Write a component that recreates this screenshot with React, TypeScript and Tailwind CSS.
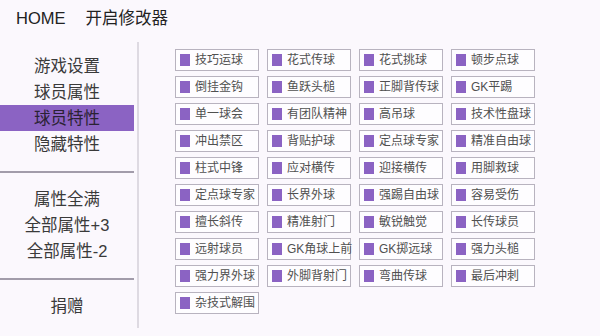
import React from 'react';

const traits = [
    '技巧运球', '花式传球', '花式挑球', '顿步点球',
    '倒挂金钩', '鱼跃头槌', '正脚背传球', 'GK平踢',
    '单一球会', '有团队精神', '高吊球', '技术性盘球',
    '冲出禁区', '背贴护球', '定点球专家', '精准自由球',
    '柱式中锋', '应对横传', '迎接横传', '用脚救球',
    '定点球专家', '长界外球', '强踢自由球', '容易受伤',
    '擅长斜传', '精准射门', '敏锐触觉', '长传球员',
    '远射球员', 'GK角球上前', 'GK掷远球', '强力头槌',
    '强力界外球', '外脚背射门', '弯曲传球', '最后冲刺',
    '杂技式解围',
];

const topMenu = ['游戏设置', '球员属性', '球员特性', '隐藏特性'];
const midMenu = ['属性全满', '全部属性+3', '全部属性-2'];

function MenuItem({ label, active }: { label: string; active?: boolean }) {
    return (
        <div
            className={`h-[26px] flex items-center justify-center text-[16.5px] ${active ? 'bg-[#8b63c3] text-[#2a2233]' : 'text-[#3a3a3a]'}`}
        >
            {label}
        </div>
    );
}

export default function App() {
    return (
        <div
            className="w-[600px] h-[336px] bg-[#fbf8fd] flex flex-col overflow-hidden"
            style={{ fontFamily: '"Liberation Sans", "Noto Sans CJK SC", sans-serif' }}
        >
            {/* header */}
            <div className="h-[42px] flex items-center pl-[16px] pb-[6px] text-[16.5px] text-[#222]">
                <span>HOME</span>
                <span className="ml-[20px]">开启修改器</span>
            </div>

            <div className="flex flex-1">
                {/* sidebar */}
                <div className="w-[134px] flex flex-col pt-[11px]">
                    {topMenu.map(m => (
                        <MenuItem key={m} label={m} active={m === '球员特性'} />
                    ))}
                    <div className="mt-[14px] h-[2px] bg-[#a29caa]" />
                    <div className="mt-[13px]">
                        {midMenu.map(m => (
                            <MenuItem key={m} label={m} />
                        ))}
                    </div>
                    <div className="mt-[14px] h-[2px] bg-[#a29caa]" />
                    <div className="mt-[13px]">
                        <MenuItem label="捐赠" />
                    </div>
                </div>

                <div className="ml-[3px] w-[2px] h-[286px] bg-[#dedae2]" />

                {/* trait grid */}
                <div className="pl-[36px] pt-[7px]">
                    <div className="grid grid-cols-[repeat(4,84px)] gap-x-[8px] gap-y-[5px]">
                        {traits.map((t, i) => (
                            <div
                                key={i}
                                className="h-[22px] flex items-center border border-[#b8b3bf] bg-[#fefdff] pl-[4px]"
                            >
                                <div className="w-[10px] h-[12px] bg-[#8b63c3] shrink-0" />
                                <span className="ml-[5px] text-[12px] text-[#505050] whitespace-nowrap">{t}</span>
                            </div>
                        ))}
                    </div>
                </div>
            </div>
        </div>
    );
}
